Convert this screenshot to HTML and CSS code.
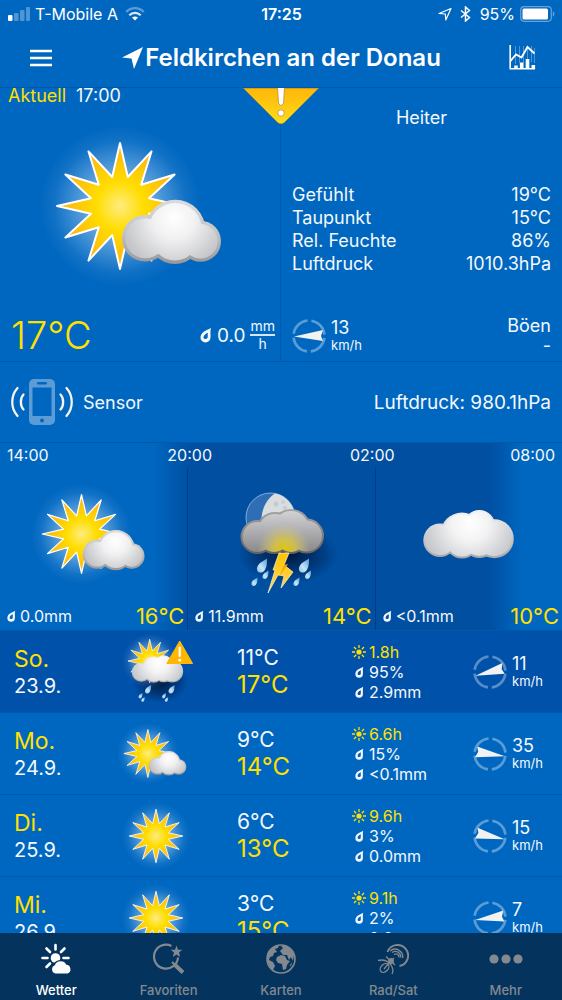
FILE: index.html
```html
<!DOCTYPE html>
<html lang="de">
<head>
<meta charset="utf-8">
<meta name="viewport" content="width=device-width, initial-scale=1">
<title>Wetter – Feldkirchen an der Donau</title>
<link rel="stylesheet" href="styles.css">
</head>
<body>
<svg class="defs" aria-hidden="true">
  <defs>
    <radialGradient id="glow"><stop offset=".3" stop-color="#cfe6fb" stop-opacity=".6"/><stop offset=".6" stop-color="#bfe0ff" stop-opacity=".32"/><stop offset=".82" stop-color="#bfe0ff" stop-opacity=".09"/><stop offset="1" stop-color="#bfe0ff" stop-opacity="0"/></radialGradient>
    <radialGradient id="sunFill" gradientUnits="userSpaceOnUse" cx="0" cy="0" r="60"><stop offset="0" stop-color="#ffec80"/><stop offset=".4" stop-color="#ffdd00"/><stop offset=".75" stop-color="#fdc40c"/><stop offset="1" stop-color="#fab515"/></radialGradient>
    <linearGradient id="cloudEdge" gradientUnits="userSpaceOnUse" x1="0" y1="-7" x2="0" y2="58"><stop offset="0" stop-color="#dcdcde"/><stop offset=".5" stop-color="#c4c4c6"/><stop offset="1" stop-color="#98989b"/></linearGradient>
    <radialGradient id="cloudFill" gradientUnits="userSpaceOnUse" cx="54" cy="12" r="52"><stop offset="0" stop-color="#fff"/><stop offset=".4" stop-color="#f1f1f2"/><stop offset="1" stop-color="#c4c5c8"/></radialGradient>
    <linearGradient id="wideEdge" gradientUnits="userSpaceOnUse" x1="0" y1="517" x2="0" y2="566"><stop offset="0" stop-color="#f4f4f5"/><stop offset="1" stop-color="#a4a5aa"/></linearGradient>
    <radialGradient id="wideFill" gradientUnits="userSpaceOnUse" cx="470" cy="530" r="46"><stop offset="0" stop-color="#fff"/><stop offset=".4" stop-color="#f3f3f4"/><stop offset="1" stop-color="#c8c9cd"/></radialGradient>
    <linearGradient id="stormEdge" gradientUnits="userSpaceOnUse" x1="0" y1="508" x2="0" y2="553"><stop offset="0" stop-color="#a5a5a7"/><stop offset="1" stop-color="#646260"/></linearGradient>
    <linearGradient id="stormFill" gradientUnits="userSpaceOnUse" x1="0" y1="510" x2="0" y2="552"><stop offset="0" stop-color="#d2d2d4"/><stop offset="1" stop-color="#88888a"/></linearGradient>
    <radialGradient id="flash" gradientUnits="userSpaceOnUse" cx="285" cy="549" r="26"><stop offset="0" stop-color="#e0c410"/><stop offset=".4" stop-color="#dcc838" stop-opacity=".8"/><stop offset="1" stop-color="#d8ca80" stop-opacity="0"/></radialGradient>
    <radialGradient id="shade"><stop offset="0" stop-color="#00102c" stop-opacity=".9"/><stop offset=".55" stop-color="#001a45" stop-opacity=".5"/><stop offset="1" stop-color="#001a45" stop-opacity="0"/></radialGradient>
    <linearGradient id="dropFill" x1="1" y1="0" x2="0" y2="1"><stop offset="0" stop-color="#4f9be0"/><stop offset=".6" stop-color="#c8e4f8"/><stop offset="1" stop-color="#86bfea"/></linearGradient>
    <linearGradient id="boltFill" x1="0" y1="0" x2="0" y2="1"><stop offset="0" stop-color="#ffc400"/><stop offset="1" stop-color="#ffd75a"/></linearGradient>
    <linearGradient id="alertFill" x1="0" y1="0" x2="0" y2="1"><stop offset="0" stop-color="#ffb608"/><stop offset="1" stop-color="#ffdc1c"/></linearGradient>
    <clipPath id="stormClip"><circle cx="276" cy="530" r="17"/><circle cx="275" cy="536" r="15"/><circle cx="292" cy="528" r="18"/><circle cx="292" cy="537" r="14"/><circle cx="258.500" cy="536" r="15"/><circle cx="307.500" cy="535" r="15.500"/></clipPath>

    <g id="sunShape">
      <circle r="80" fill="url(#glow)"/>
      <polygon fill="url(#sunFill)" stroke="#fff" stroke-width="2" stroke-linejoin="round" points="0,-63 7.8,-29 31.5,-54.6 21.2,-21.2 54.6,-31.5 29,-7.8 63,0 29,7.8 54.6,31.5 21.2,21.2 31.5,54.6 7.8,29 0,63 -7.8,29 -31.5,54.6 -21.2,21.2 -54.6,31.5 -29,7.8 -63,0 -29,-7.8 -54.6,-31.5 -21.2,-21.2 -31.5,-54.6 -7.8,-29"/>
    </g>
    <g id="cloudShape">
      <g fill="url(#cloudEdge)"><circle cx="25.3" cy="32.3" r="23.3"/><circle cx="55.3" cy="23.7" r="30"/><circle cx="55" cy="31" r="27"/><circle cx="80.5" cy="35.3" r="20.5"/></g>
      <g fill="url(#cloudFill)"><circle cx="25.3" cy="32.3" r="20"/><circle cx="55.3" cy="23.7" r="26.7"/><circle cx="55" cy="31" r="23.5"/><circle cx="80.5" cy="35.3" r="17.2"/><rect x="25" y="28" width="55" height="20"/></g>
    </g>
    <g id="wideCloud">
      <g fill="url(#wideEdge)"><circle cx="440" cy="547.3" r="16.7"/><circle cx="462" cy="541" r="21.5"/><circle cx="462" cy="548" r="17.5"/><circle cx="479.3" cy="533" r="16"/><circle cx="479.3" cy="548" r="17"/><circle cx="494.3" cy="545.7" r="19.5"/></g>
      <g fill="url(#wideFill)"><circle cx="440" cy="547.3" r="14.7"/><circle cx="462" cy="541" r="19.5"/><circle cx="462" cy="548" r="15.5"/><circle cx="479.3" cy="533" r="14"/><circle cx="479.3" cy="548" r="15"/><circle cx="494.3" cy="545.7" r="17.5"/></g>
    </g>
    <path id="rainDrop" d="M5-9C5-3 4.500 1 2 3.500C0 5.500-3 5.500-4.500 3.500C-6 1-4.500-2-2-4.500Z" fill="url(#dropFill)"/>
  </defs>

  <symbol id="sunCloud" viewBox="-81 -80 202 160"><use href="#sunShape"/><use href="#cloudShape"/></symbol>
  <symbol id="sun" viewBox="-80 -80 160 160"><use href="#sunShape"/></symbol>
  <symbol id="overcast" viewBox="419 491 100 100"><use href="#wideCloud"/></symbol>
  <symbol id="storm" viewBox="223 483 118 117">
    <ellipse cx="289" cy="553" rx="50" ry="30" fill="url(#shade)"/>
    <circle cx="271.500" cy="516.500" r="24.500" fill="#2f6db4" stroke="#9cc0e4" stroke-width=".8"/>
    <path d="M276 492.400A24.500 24.500 0 0 1 296 516L290 530H264C260 516 264 500 276 492.400Z" fill="#d9dde0"/>
    <circle cx="277" cy="503" r="2.500" fill="#c4cacf"/><circle cx="284" cy="501" r="2" fill="#c9ced2"/><circle cx="286" cy="507" r="2" fill="#c4cacf"/>
    <g fill="url(#stormEdge)"><circle cx="258.500" cy="536" r="17"/><circle cx="276" cy="530" r="19"/><circle cx="275" cy="536" r="17"/><circle cx="292" cy="528" r="20"/><circle cx="292" cy="537" r="16"/><circle cx="307.500" cy="535" r="17.500"/></g>
    <g fill="url(#stormFill)"><circle cx="258.500" cy="536" r="15"/><circle cx="276" cy="530" r="17"/><circle cx="275" cy="536" r="15"/><circle cx="292" cy="528" r="18"/><circle cx="292" cy="537" r="14"/><circle cx="307.500" cy="535" r="15.500"/></g>
    <rect x="255" y="520" width="60" height="34" fill="url(#flash)" clip-path="url(#stormClip)"/>
    <g fill="url(#boltFill)" stroke="#fff3c4" stroke-width=".7"><path d="M280 552H290L285 564L294 571L282 587L285 575L279 574L269 592L276 569H274Z"/></g>
    <path d="M285 564L289 563L280 576" fill="#f6a800"/>
    <use href="#rainDrop" transform="translate(263 566.500)"/><use href="#rainDrop" transform="translate(266.500 575) scale(.6)"/><use href="#rainDrop" transform="translate(255.500 582) scale(.6)"/>
    <use href="#rainDrop" transform="translate(305 566.500)"/><use href="#rainDrop" transform="translate(309 575) scale(.6)"/><use href="#rainDrop" transform="translate(297.500 582) scale(.6)"/>
  </symbol>
  <symbol id="sunRain" viewBox="118 633 76 76">
    <ellipse cx="161" cy="681" rx="28" ry="21" fill="url(#shade)"/>
    <use href="#sunShape" transform="translate(150.700 660) scale(.345)"/>
    <use href="#wideCloud" transform="translate(-107.200 361) scale(.567)"/>
    <use href="#rainDrop" transform="translate(149 689.500) scale(.6)"/><use href="#rainDrop" transform="translate(141.500 695.500) scale(.38)"/><use href="#rainDrop" transform="translate(144 699) scale(.34)"/>
    <use href="#rainDrop" transform="translate(172.500 689.500) scale(.6)"/><use href="#rainDrop" transform="translate(165 695.500) scale(.38)"/><use href="#rainDrop" transform="translate(167.500 699) scale(.34)"/>
    <path d="M180.700 640L193.600 662.500H167.800Z" fill="#ffb703" stroke="#ffb703" stroke-linejoin="round"/>
    <path d="M180.700 646.500V655" stroke="#fff" stroke-width="2.200" stroke-linecap="round"/><circle cx="180.700" cy="659.200" r="1.400" fill="#fff"/>
  </symbol>
  <symbol id="drop" viewBox="0 0 12 16"><path fill="currentColor" fill-rule="evenodd" d="M11 1C9 2 7 3.200 4.500 4.300C1.500 6 .5 8.500 .5 10.500A5 5 0 0 0 10.500 10.500C10.800 7.500 10 4 11 1ZM7.800 5.800C5 7 3.500 8.800 3.500 10.500C3.500 12.500 7.500 12.500 7.700 10.300Z"/></symbol>
  <symbol id="ray" viewBox="0 0 14 14"><circle cx="7" cy="7" r="2.600" fill="currentColor"/><path d="M7 0V3M7 11V14M0 7H3M11 7H14M2 2L4.200 4.200M9.800 9.800L12 12M12 2L9.800 4.200M4.200 9.800L2 12" stroke="currentColor" stroke-width="1.300" fill="none"/></symbol>
  <symbol id="ring" viewBox="0 0 34 34"><circle cx="17" cy="17" r="15.500" fill="none" stroke="#fff" stroke-opacity=".35" stroke-width="2.600" stroke-dasharray="20.400 3.950" stroke-dashoffset="-1.970"/></symbol>
</svg>

<div class="app">
  <header class="top">
    <div class="status">
      <div class="carrier">
        <svg width="22" height="14" viewBox="0 0 22 14" fill="#fff"><rect y="8" width="4.500" height="6" rx="1"/><g opacity=".3"><rect x="6" y="6" width="4.500" height="8" rx="1"/><rect x="12" y="3" width="4.500" height="11" rx="1"/><rect x="18" width="4" height="14" rx="1"/></g></svg>
        <span class="carrier-name">T-Mobile A</span>
        <svg width="20" height="14" viewBox="0 0 20 14" fill="none" stroke="#fff" stroke-width="2.300"><path d="M1.200 5C6-.2 14-.2 18.800 5" opacity=".35"/><path d="M4.300 8.200C7.500 5 12.500 5 15.700 8.200" opacity=".85"/><path d="M7 10.500C9 9 11 9 13 10.500L10 13.600Z" fill="#fff" stroke="none"/></svg>
      </div>
      <time class="clock">17:25</time>
      <div class="power">
        <svg width="14" height="14" viewBox="0 0 14 14" fill="none" stroke="#fff" stroke-width="1.200" stroke-linejoin="round"><path d="M1 6.500L13 1.500L7.800 13L7.300 7Z"/></svg>
        <svg class="bluetooth" width="11" height="16" viewBox="0 0 11 16" fill="none" stroke="#fff" stroke-width="1.500"><path d="M1 4.500L9.500 11.500L5.500 15V1L9.500 4.500L1 11.500"/></svg>
        <span>95%</span>
        <svg width="35" height="16" viewBox="0 0 35 16"><rect x=".7" y=".7" width="30.600" height="14.600" rx="3.500" fill="none" stroke="#fff" stroke-opacity=".4" stroke-width="1.200"/><rect x="2.500" y="2.500" width="25.500" height="11" rx="1.500" fill="#fff"/><path d="M32.800 5.500C35 6 35 10 32.800 10.500Z" fill="#fff" fill-opacity=".4"/></svg>
      </div>
    </div>
    <div class="titlebar">
      <button class="icon-button" type="button" aria-label="Menü"><svg width="22" height="18" viewBox="0 0 22 18" stroke="#fff" stroke-width="2.400"><path d="M0 2H22M0 9H22M0 16H22"/></svg></button>
      <h1 class="title"><svg width="21" height="22" viewBox="0 0 21 22" fill="#fff"><path d="M21 0L12 22L9.500 11.500L0 10.500Z"/></svg>Feldkirchen an der Donau</h1>
      <button class="icon-button" type="button" aria-label="Diagramme"><svg width="27" height="25" viewBox="0 0 27 25" fill="none" stroke="#fff"><path d="M6.500 1V19M10.500 1V18M14.500 1V18M18.500 1V14M22.500 1V17M25.500 3V18" stroke-opacity=".3"/><path d="M1.200 0V23.800H26" stroke-width="1.600"/><path d="M1.500 16L7 9.500L12.500 12.500L18.500 2L25.500 8.500" stroke-width="1.900"/><path d="M7 24V20.500M12.700 24V17.500M18.500 24V14M24.300 24V20" stroke-width="3.600"/></svg></button>
    </div>
  </header>

  <main class="content">
    <section class="current">
      <svg class="alert" width="76" height="38" viewBox="0 0 76 38"><path d="M0 0H76L42 34Q38 38 34 34Z" fill="url(#alertFill)" stroke="#6a7a50" stroke-width=".7"/><path d="M34.500-1H41.500L40.500 15Q38 20 35.500 15Z" fill="#fff" stroke="#a58a3a" stroke-width=".7"/><circle cx="38" cy="25" r="3.200" fill="#fff" stroke="#a58a3a" stroke-width=".7"/></svg>
      <div class="now">
        <p class="now-time"><span class="yellow">Aktuell</span><time>17:00</time></p>
        <svg class="now-icon"><use href="#sunCloud"/></svg>
        <div class="now-foot">
          <strong class="now-temp">17°C</strong>
          <span class="rain"><svg class="drop-large"><use href="#drop"/></svg>0.0<span class="fraction"><span>mm</span><span class="denominator">h</span></span></span>
        </div>
      </div>
      <div class="facts">
        <p class="condition">Heiter</p>
        <dl class="fact-list">
          <div><dt>Gefühlt</dt><dd>19°C</dd></div>
          <div><dt>Taupunkt</dt><dd>15°C</dd></div>
          <div><dt>Rel. Feuchte</dt><dd>86%</dd></div>
          <div><dt>Luftdruck</dt><dd>1010.3hPa</dd></div>
        </dl>
        <div class="fact-foot">
          <div class="wind"><svg class="compass" viewBox="0 0 34 34"><use href="#ring"/><path d="M2 17.500L31 11L29 17L31 22Z" fill="#f2f2f2"/></svg><p><b>13</b><small>km/h</small></p></div>
          <p class="gusts"><span>Böen</span><span>-</span></p>
        </div>
      </div>
    </section>

    <section class="sensor">
      <svg width="62" height="48" viewBox="0 0 62 48"><rect x="18" y="1" width="26" height="46" rx="5" fill="#5b9bd6"/><rect x="21.500" y="9.500" width="19" height="28.500" fill="#0067c0"/><rect x="26" y="4" width="10" height="2.500" rx="1.200" fill="#0067c0"/><circle cx="31" cy="42.500" r="1.900" fill="#0067c0"/><g fill="none" stroke="#f4f4f4" stroke-width="2.300" stroke-linecap="round"><path d="M12.500 16.500C9 20 9 28 12.500 31.500M6.500 10C-.5 18-.5 30 6.500 38M49.500 16.500C53 20 53 28 49.500 31.500M55.500 10C62.500 18 62.500 30 55.500 38"/></g></svg>
      <h2 class="sensor-name">Sensor</h2>
      <p class="sensor-value">Luftdruck: 980.1hPa</p>
    </section>

    <section class="hours" aria-label="Stunden">
      <div class="times"><time>14:00</time><time>20:00</time><time>02:00</time><time>08:00</time></div>
      <div class="slots">
        <article class="slot"><svg class="slot-icon"><use href="#sunCloud"/></svg><p class="slot-foot"><svg class="drop"><use href="#drop"/></svg>0.0mm<strong>16°C</strong></p></article>
        <article class="slot"><svg class="slot-icon tall"><use href="#storm"/></svg><p class="slot-foot"><svg class="drop"><use href="#drop"/></svg>11.9mm<strong>14°C</strong></p></article>
        <article class="slot"><svg class="slot-icon"><use href="#overcast"/></svg><p class="slot-foot"><svg class="drop"><use href="#drop"/></svg>&lt;0.1mm<strong>10°C</strong></p></article>
      </div>
    </section>

    <ul class="days">
      <li class="day sunday">
        <div class="date"><h3>So.</h3><p>23.9.</p></div>
        <svg class="day-icon rainy"><use href="#sunRain"/></svg>
        <div class="temps"><p>11°C</p><p class="high">17°C</p></div>
        <ul class="details"><li class="yellow"><svg class="ray"><use href="#ray"/></svg>1.8h</li><li><svg class="drop"><use href="#drop"/></svg>95%</li><li><svg class="drop"><use href="#drop"/></svg>2.9mm</li></ul>
        <div class="wind"><svg class="compass" viewBox="0 0 34 34"><use href="#ring"/><path d="M2 17.500L31 11L29 17L31 22Z" fill="#f2f2f2" transform="rotate(-13 17 17)"/></svg><p><b>11</b><small>km/h</small></p></div>
      </li>
      <li class="day">
        <div class="date"><h3>Mo.</h3><p>24.9.</p></div>
        <svg class="day-icon"><use href="#sunCloud"/></svg>
        <div class="temps"><p>9°C</p><p class="high">14°C</p></div>
        <ul class="details"><li class="yellow"><svg class="ray"><use href="#ray"/></svg>6.6h</li><li><svg class="drop"><use href="#drop"/></svg>15%</li><li><svg class="drop"><use href="#drop"/></svg>&lt;0.1mm</li></ul>
        <div class="wind"><svg class="compass" viewBox="0 0 34 34"><use href="#ring"/><path d="M2 17.500L31 11L29 17L31 22Z" fill="#f2f2f2" transform="rotate(191 17 17)"/></svg><p><b>35</b><small>km/h</small></p></div>
      </li>
      <li class="day">
        <div class="date"><h3>Di.</h3><p>25.9.</p></div>
        <svg class="day-icon sunny"><use href="#sun"/></svg>
        <div class="temps"><p>6°C</p><p class="high">13°C</p></div>
        <ul class="details"><li class="yellow"><svg class="ray"><use href="#ray"/></svg>9.6h</li><li><svg class="drop"><use href="#drop"/></svg>3%</li><li><svg class="drop"><use href="#drop"/></svg>0.0mm</li></ul>
        <div class="wind"><svg class="compass" viewBox="0 0 34 34"><use href="#ring"/><path d="M2 17.500L31 11L29 17L31 22Z" fill="#f2f2f2" transform="rotate(194 17 17)"/></svg><p><b>15</b><small>km/h</small></p></div>
      </li>
      <li class="day">
        <div class="date"><h3>Mi.</h3><p>26.9.</p></div>
        <svg class="day-icon sunny"><use href="#sun"/></svg>
        <div class="temps"><p>3°C</p><p class="high">15°C</p></div>
        <ul class="details"><li class="yellow"><svg class="ray"><use href="#ray"/></svg>9.1h</li><li><svg class="drop"><use href="#drop"/></svg>2%</li><li><svg class="drop"><use href="#drop"/></svg>0.0mm</li></ul>
        <div class="wind"><svg class="compass" viewBox="0 0 34 34"><use href="#ring"/><path d="M2 17.500L31 11L29 17L31 22Z" fill="#f2f2f2" transform="rotate(-6 17 17)"/></svg><p><b>7</b><small>km/h</small></p></div>
      </li>
    </ul>
  </main>

  <nav class="tabs">
    <a class="tab active" href="#wetter" aria-current="page"><svg width="32" height="32" viewBox="0 0 32 32" fill="currentColor"><circle cx="15.500" cy="15" r="4.800"/><path d="M15.500 2V6.500M6.500 5.500L10 9M24.500 5.500L21 9M2.500 15H7.500M23.500 15H28.500M6.500 24L10 20.500" stroke="currentColor" stroke-width="2.600" stroke-linecap="round"/><path d="M15 31.500A5.200 5.200 0 0 1 13.500 21.500A7.800 7.800 0 0 1 27 20.500A5.800 5.800 0 0 1 28 31.500Z" fill="#04345e"/><path d="M15.500 30.500A4.300 4.300 0 0 1 14.800 22.300A6.300 6.300 0 0 1 26.300 21.800A4.500 4.500 0 0 1 27.500 30.500Z"/></svg>Wetter</a>
    <a class="tab" href="#favoriten"><svg width="32" height="32" viewBox="0 0 32 32" fill="none" stroke="currentColor"><path d="M18.500 3A12 12 0 1 0 25 14.500" stroke-width="2.200"/><path d="M21 21L30 29.500" stroke-width="4"/><path d="M19 19L22 22" stroke-width="2"/><path d="M23.500 2.500L25 6.800H29.300L26 9.600L27.100 14L23.500 11.400L19.900 14L21 9.600L17.700 6.800H22Z" fill="currentColor" stroke="none"/></svg>Favoriten</a>
    <a class="tab" href="#karten"><svg width="32" height="32" viewBox="0 0 32 32" fill="currentColor"><circle cx="16" cy="16" r="14" fill="none" stroke="currentColor" stroke-width="1.600"/><path d="M3 9C6 4 10 2 14 2L13 5L10 6L12 9L9 10L8 13L5 14L4 17L8 19L10 23L8 27C2 22 1 14 3 9ZM15 8L18 5L16 3L22 3L27 8L29 12L28 18L26 14L24 17L22 12L18 12ZM12 14L16 12L20 13L22 17L25 18L22 22L21 26L18 27L17 21L13 20L11 17ZM25 22L27 19L26 24Z"/></svg>Karten</a>
    <a class="tab" href="#radsat"><svg width="32" height="32" viewBox="0 0 32 32" fill="none" stroke="currentColor" stroke-width="1.300"><path d="M10.500 9A10.600 10.600 0 1 1 22.500 23" stroke-width="1.900"/><path d="M13 8C19 3 27 9 25.500 15M15 9.500C20 6.500 24.500 11 23.500 14.500M17 11.500C20 10 22.500 12 21.800 14.500"/><path d="M9 13.500L12 16.500M17 15L12 20M1 17.500C5 16.500 9 17.500 11 19L14 22C16 25 16.500 28 15 31"/><circle cx="14" cy="18" r="2.300" fill="currentColor"/><ellipse cx="7.500" cy="25" rx="5" ry="3.600" transform="rotate(-45 7.500 25)"/><path d="M7 26L12 20M15 19L18 22"/></svg>Rad/Sat</a>
    <a class="tab" href="#mehr"><svg width="34" height="32" viewBox="0 0 34 32" fill="currentColor"><circle cx="5" cy="16" r="4.600"/><circle cx="17" cy="16" r="4.600"/><circle cx="29" cy="16" r="4.600"/></svg>Mehr</a>
  </nav>
</div>
</body>
</html>
```
FILE: styles.css
```css
* { box-sizing: border-box; }

:root {
  --blue: #0067c0;
  --night: #004fa1;
  --line: #0058a8;
  --yellow: #ffe000;
}

html, body { height: 100%; }

body, h1, h2, h3, p, dl, dd, ul { margin: 0; padding: 0; }

body {
  background: var(--blue);
  color: #f4f8fc;
  font-family: Inter, "Liberation Sans", sans-serif;
  font-size: 18px;
}

ul { list-style: none; }
svg { display: block; flex: none; }

.defs { position: absolute; width: 0; height: 0; }
.yellow { color: var(--yellow); }

.app {
  display: flex;
  flex-direction: column;
  height: 100vh;
  overflow: hidden;
}

/* Header */
.top { flex: none; border-bottom: 1px solid var(--line); color: #fff; }

.status {
  display: grid;
  grid-template-columns: 1fr auto 1fr;
  align-items: center;
  height: 28px;
  padding: 0 7px 0 8px;
  font-size: 16px;
}
.carrier, .power { display: flex; align-items: center; }
.carrier { gap: 5px; }
.carrier-name { margin-right: 2px; }
.clock { font-weight: 600; }
.power { justify-content: flex-end; gap: 5px; }
.bluetooth { margin: 0 4px 0 3px; }

.titlebar {
  display: flex;
  align-items: center;
  justify-content: space-between;
  height: 59px;
  padding: 0 20px 0 21px;
}
.icon-button {
  display: grid;
  place-items: center;
  width: 40px;
  height: 40px;
  padding: 0;
  border: 0;
  background: none;
}
.title {
  display: flex;
  align-items: center;
  gap: 2px;
  font-size: 24px;
  font-weight: 600;
  white-space: nowrap;
}

/* Content */
.content {
  flex: 1;
  min-height: 0;
  overflow-y: auto;
  scrollbar-width: none;
}

.current {
  position: relative;
  display: grid;
  grid-template-columns: 1fr 1fr;
  border-bottom: 1px solid var(--line);
}
.alert { position: absolute; top: 0; left: 50%; transform: translateX(-50%); }

.now {
  display: flex;
  flex-direction: column;
  border-right: 1px solid var(--line);
}
.now-time { display: flex; gap: 10px; padding-left: 8px; line-height: 15px; }
.now-icon { width: 202px; height: 160px; margin: 23px auto 27px; }
.now-foot {
  display: flex;
  align-items: center;
  justify-content: space-between;
  padding: 0 5px 4px 11px;
}
.now-temp { color: var(--yellow); font-size: 38px; font-weight: 300; line-height: 44px; }
.rain { display: flex; align-items: center; gap: 5px; font-size: 19px; }
.drop-large { width: 12px; height: 16px; }
.fraction { display: grid; font-size: 14px; line-height: 16px; text-align: center; }
.denominator { border-top: 2px solid #d5e6f6; }

.facts { display: flex; flex-direction: column; padding: 18px 11px 5px 11px; }
.condition { line-height: 24px; text-align: center; }
.fact-list { display: grid; margin-top: 53px; }
.fact-list div { display: flex; justify-content: space-between; line-height: 23px; }
.fact-foot { display: flex; justify-content: space-between; margin-top: auto; }
.gusts { display: grid; line-height: 20px; text-align: right; }

.wind { display: flex; align-items: center; gap: 5px; }
.wind p { display: grid; }
.wind b { font-size: 18px; font-weight: 400; line-height: 18px; }
.wind small { font-size: 13px; line-height: 16px; }
.compass { width: 34px; height: 34px; }

.sensor {
  display: flex;
  align-items: center;
  gap: 10px;
  padding: 16px 11px;
  border-bottom: 1px solid var(--line);
}
.sensor-name { font-size: 18px; font-weight: 400; }
.sensor-value { margin-left: auto; font-size: 19px; }

/* Hourly strip */
.hours {
  border-bottom: 1px solid var(--line);
  background: linear-gradient(90deg, var(--blue) 27%, var(--night) 34%, var(--night) 87%, var(--blue) 93%);
}
.times {
  display: grid;
  grid-template-columns: 1fr 2fr 2fr 1fr;
  padding: 0 7px;
  font-size: 16px;
  line-height: 25px;
  text-align: center;
}
.times :first-child { text-align: left; }
.times :last-child { text-align: right; }
.slots { display: grid; grid-template-columns: repeat(3, 1fr); }
.slot { border-left: 1px solid #003f85; }
.slot:first-child { border-left: 0; }
.slot-icon { width: 126px; height: 100px; margin: 16px auto 18px; }
.slot-icon.tall { height: 117px; margin: 16px auto 1px; }
.slot-foot {
  display: flex;
  align-items: center;
  gap: 4px;
  padding: 0 3px 0 7px;
  font-size: 16px;
  line-height: 28px;
}
.slot-foot strong { margin-left: auto; color: var(--yellow); font-size: 22px; font-weight: 400; }
.drop { width: 9px; height: 12px; }

/* Daily list */
.day {
  display: grid;
  grid-template-columns: 95fr 142fr 115fr 121fr 89fr;
  align-items: center;
  height: 82px;
  border-bottom: 1px solid var(--line);
}
.day.sunday { background: #0051aa; }
.date { padding-left: 14px; font-size: 20px; line-height: 26px; }
.date h3 { color: var(--yellow); font-size: 23px; font-weight: 400; line-height: 28px; }
.day-icon { width: 77px; height: 61px; margin-left: 22px; }
.day-icon.rainy { width: 76px; height: 76px; }
.day-icon.sunny { width: 68px; height: 68px; margin-left: 27px; }
.temps { font-size: 21px; line-height: 26px; }
.high { color: var(--yellow); font-size: 24px; line-height: 28px; }
.details { font-size: 16px; line-height: 20px; }
.details li { display: flex; align-items: center; }
.details .drop { margin: 0 5px 0 3px; }
.ray { width: 14px; height: 14px; margin-right: 3px; }

/* Tab bar */
.tabs {
  display: grid;
  grid-template-columns: repeat(5, 1fr);
  flex: none;
  height: 67px;
  background: #04345e;
}
.tab {
  display: flex;
  flex-direction: column;
  align-items: center;
  gap: 5px;
  padding-top: 10px;
  color: #83898f;
  font-size: 13px;
  font-weight: 500;
  line-height: 20px;
  text-decoration: none;
}
.tab.active { color: #fff; }
```
